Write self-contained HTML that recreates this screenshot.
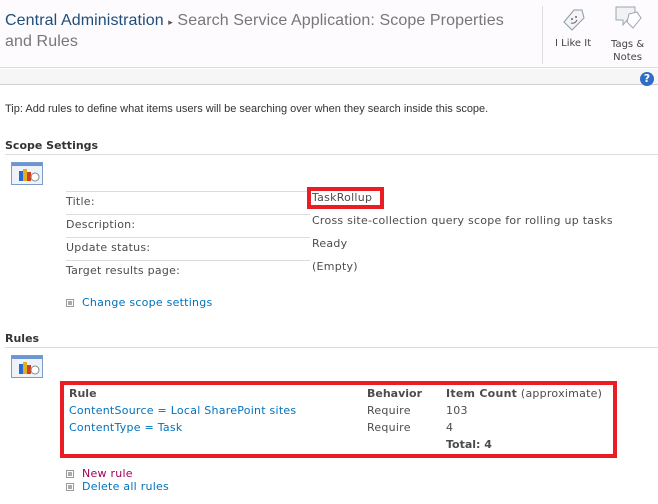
<!DOCTYPE html>
<html><head><style>
*{margin:0;padding:0;box-sizing:border-box}
body{width:658px;height:504px;background:#fff;position:relative;overflow:hidden;font-family:"DejaVu Sans",Verdana,sans-serif;font-size:11px;letter-spacing:0.25px;color:#4c4c4c}
.a{position:absolute;white-space:nowrap}
.hl{position:absolute;height:1px;background:#dcdcdc}
.lnk{color:#0072bc}
.bul{position:absolute;width:8px;height:8px;border:1px solid #999;background:#fff}
.bul:after{content:"";position:absolute;left:1px;top:1px;width:4px;height:4px;background:#aaa}
.b{font-weight:bold;letter-spacing:0}
.red{position:absolute;border:4px solid #ec1c24}
</style></head><body>
<div class="a" style="left:0;top:0;width:658px;height:68px;background:#fdfbfe;border-bottom:1px solid #dedede"></div>
<div class="a" style="left:0;top:69px;width:658px;height:16px;background:#f6f6f6;border-bottom:1px solid #cfcfcf"></div>
<div class="a" style="left:5px;top:11px;font-family:'Liberation Sans',sans-serif;font-size:16px;letter-spacing:0.1px;color:#777;line-height:20px;white-space:normal;width:525px"><span style="color:#1e4e79">Central Administration</span> <span style="font-size:9px;color:#555">&#9656;</span> Search Service Application: Scope Properties and Rules</div>
<div class="a" style="left:542px;top:6px;width:1px;height:58px;background:#ddd"></div>
<svg class="a" style="left:560px;top:6px" width="28" height="28" viewBox="0 0 28 28"><path d="M4 16 L14 4 L22 4 L24 12 L12 24 Z" fill="#f4f4f4" stroke="#8c9aa8"/><circle cx="12" cy="13" r="1" fill="#667"/><circle cx="16" cy="11" r="1" fill="#667"/><path d="M11 17 Q15 18 17 14" fill="none" stroke="#667"/></svg>
<div class="a" style="left:555px;top:38px;font-size:10px;letter-spacing:0;color:#444">I Like It</div>
<svg class="a" style="left:613px;top:4px" width="30" height="30" viewBox="0 0 30 30"><path d="M3 3 H22 V16 H14 L10 21 V16 H3 Z" fill="#f2f2f2" stroke="#9aa6b2"/><path d="M16 10 L24 8 L28 14 L20 24 L14 18 Z" fill="#fff" stroke="#9aa6b2"/></svg>
<div class="a" style="left:611px;top:38px;font-size:10px;letter-spacing:0;color:#444;text-align:center;line-height:13px">Tags &amp;<br>Notes</div>
<div class="a" style="left:640px;top:72px;width:14px;height:14px;border-radius:50%;background:#2e6ec6;color:#fff;font-size:11px;font-weight:bold;text-align:center;line-height:14px;letter-spacing:0">?</div>
<div class="a" style="left:5px;top:103px;font-size:11px;letter-spacing:0;font-family:'Liberation Sans',sans-serif;color:#333">Tip: Add rules to define what items users will be searching over when they search inside this scope.</div>

<div class="a b" style="left:5px;top:139px;color:#333">Scope Settings</div>
<div class="hl" style="left:5px;top:154px;width:653px"></div>
<svg class="a" style="left:11px;top:162px" width="32" height="23" viewBox="0 0 32 23"><rect x=".5" y=".5" width="31" height="22" fill="#eef3fa" stroke="#7a9ccc"/><rect x="1" y="1" width="30" height="3" fill="#6d95d5"/><rect x="8" y="9" width="4" height="10" fill="#2a6ad0"/><rect x="12" y="7" width="4" height="12" fill="#e0b020"/><rect x="16" y="10" width="4" height="9" fill="#d04020"/><circle cx="24" cy="15" r="4" fill="#fff" stroke="#888"/></svg>
<div class="hl" style="left:66px;top:191px;width:244px"></div>
<div class="hl" style="left:66px;top:214px;width:244px"></div>
<div class="hl" style="left:66px;top:237px;width:244px"></div>
<div class="hl" style="left:66px;top:260px;width:244px"></div>
<div class="a" style="left:66px;top:195px">Title:</div>
<div class="a" style="left:66px;top:218px">Description:</div>
<div class="a" style="left:66px;top:241px">Update status:</div>
<div class="a" style="left:66px;top:264px">Target results page:</div>
<div class="red" style="left:307px;top:187px;width:77px;height:22px"></div>
<div class="a" style="left:312px;top:191px">TaskRollup</div>
<div class="a" style="left:312px;top:214px">Cross site-collection query scope for rolling up tasks</div>
<div class="a" style="left:312px;top:237px">Ready</div>
<div class="a" style="left:312px;top:260px">(Empty)</div>
<div class="bul" style="left:66px;top:299px"></div>
<div class="a lnk" style="left:82px;top:296px">Change scope settings</div>

<div class="a b" style="left:5px;top:332px;color:#333">Rules</div>
<div class="hl" style="left:5px;top:347px;width:653px"></div>
<svg class="a" style="left:11px;top:355px" width="32" height="23" viewBox="0 0 32 23"><rect x=".5" y=".5" width="31" height="22" fill="#eef3fa" stroke="#7a9ccc"/><rect x="1" y="1" width="30" height="3" fill="#6d95d5"/><rect x="8" y="9" width="4" height="10" fill="#2a6ad0"/><rect x="12" y="7" width="4" height="12" fill="#e0b020"/><rect x="16" y="10" width="4" height="9" fill="#d04020"/><circle cx="24" cy="15" r="4" fill="#fff" stroke="#888"/></svg>
<div class="red" style="left:60px;top:381px;width:557px;height:77px"></div>
<div class="a b" style="left:69px;top:387px">Rule</div>
<div class="a b" style="left:367px;top:387px">Behavior</div>
<div class="a" style="left:446px;top:387px"><b>Item Count</b> (approximate)</div>
<div class="a lnk" style="left:69px;top:404px">ContentSource = Local SharePoint sites</div>
<div class="a" style="left:367px;top:404px">Require</div>
<div class="a" style="left:446px;top:404px">103</div>
<div class="a lnk" style="left:69px;top:421px">ContentType = Task</div>
<div class="a" style="left:367px;top:421px">Require</div>
<div class="a" style="left:446px;top:421px">4</div>
<div class="a b" style="left:446px;top:438px">Total: 4</div>
<div class="bul" style="left:66px;top:470px"></div>
<div class="a" style="left:82px;top:467px;color:#a0005a">New rule</div>
<div class="bul" style="left:66px;top:483px"></div>
<div class="a lnk" style="left:82px;top:480px">Delete all rules</div>
</body></html>
